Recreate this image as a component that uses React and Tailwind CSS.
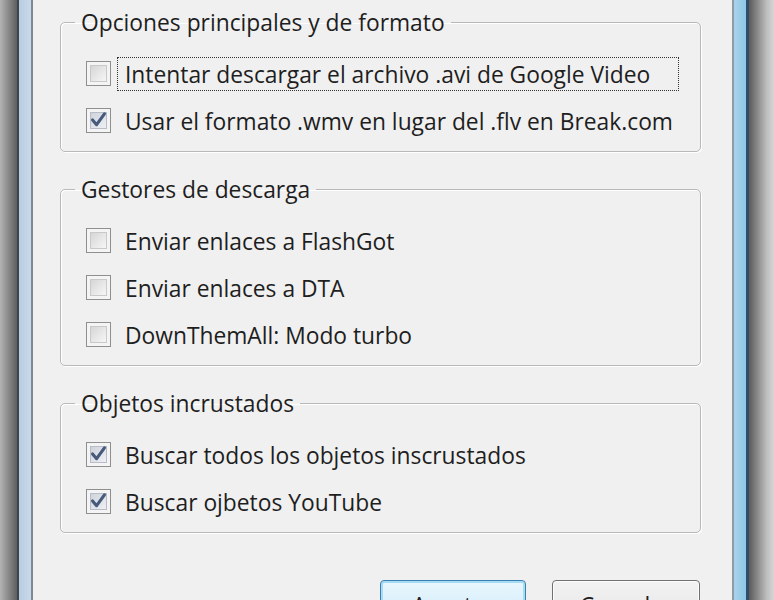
import React from 'react';

const GROUPS = [
  {
    title: 'Opciones principales y de formato',
    items: [
      { label: 'Intentar descargar el archivo .avi de Google Video', checked: false, focused: true },
      { label: 'Usar el formato .wmv en lugar del .flv en Break.com', checked: true },
    ],
  },
  {
    title: 'Gestores de descarga',
    items: [
      { label: 'Enviar enlaces a FlashGot', checked: false },
      { label: 'Enviar enlaces a DTA', checked: false },
      { label: 'DownThemAll: Modo turbo', checked: false },
    ],
  },
  {
    title: 'Objetos incrustados',
    items: [
      { label: 'Buscar todos los objetos inscrustados', checked: true },
      { label: 'Buscar ojbetos YouTube', checked: true },
    ],
  },
];

function Checkbox({ checked }) {
  return (
    <div className="w-[25px] h-[25px] shrink-0 border border-[#8f8f8f] bg-[#f4f4f4] p-[3px]">
      <div
        className={`relative w-full h-full border ${
          checked
            ? 'border-[#b7bcc6] bg-[linear-gradient(135deg,#cfd3db,#eef0f4)]'
            : 'border-[#c9c9c9] bg-[linear-gradient(135deg,#d6d6d6,#f6f6f6)]'
        }`}
      >
        {checked && (
          <svg viewBox="0 0 16 16" className="absolute left-[-2px] top-[-3px] w-[19px] h-[19px]">
            <path d="M3 8.4 L6.4 12.4 L13 3.2" fill="none" stroke="#465a7c" strokeWidth="2.6" strokeLinejoin="round" strokeLinecap="round" />
          </svg>
        )}
      </div>
    </div>
  );
}

function Row({ label, checked, focused }) {
  return (
    <div className="flex items-center h-[47px] whitespace-nowrap">
      <Checkbox checked={checked} />
      <span
        className={`ml-[6px] pt-[2px] leading-[30px] ${
          focused ? 'border border-dotted border-[#333] pl-[7px] pr-[28px]' : 'pl-[7px] border border-transparent'
        }`}
      >
        {label}
      </span>
    </div>
  );
}

function Group({ title, items }) {
  return (
    <fieldset className="border border-[#b9b9b9] rounded-[5px] px-0 pt-[13px] pb-[7px] shadow-[inset_1px_1px_0_#fff,1px_1px_0_#fff]">
      <legend className="ml-[14px] px-[6px] pt-[1px] leading-[29px] whitespace-nowrap">{title}</legend>
      <div className="pl-[25px]">
        {items.map((it) => (
          <Row key={it.label} {...it} />
        ))}
      </div>
    </fieldset>
  );
}

export default function App() {
  return (
    <div className="w-[774px] h-[600px] overflow-hidden flex font-['Open_Sans',sans-serif] text-[22.8px] text-[#1e1e1e]">
      {/* left shadow + frame */}
      <div className="w-[17px] shrink-0 bg-[linear-gradient(to_right,#b4b4b4,#5e5e5e)]" />
      <div className="w-[2px] shrink-0 bg-[#3b4550]" />
      <div className="w-[12px] shrink-0 bg-[linear-gradient(to_right,#b9cde0,#c9d9ea)]" />
      <div className="w-[2px] shrink-0 bg-[#7d8a96]" />

      {/* dialog content */}
      <div className="w-[699px] shrink-0 bg-[#f0f0f0] flex flex-col pl-[27px] pr-[31px] pt-[7px]">
        <div className="flex flex-col gap-[22px]">
          {GROUPS.map((g) => (
            <Group key={g.title} {...g} />
          ))}
        </div>
        <div className="flex justify-end gap-[26px] mt-[47px] pr-[1px]">
          <button className="w-[146px] h-[52px] shrink-0 rounded-[4px] border border-[#3c7fb1] bg-[linear-gradient(#eaf6fd,#d9f0fc_50%,#bee6fd)] shadow-[inset_0_0_0_2px_#a7dcf5]">
            Aceptar
          </button>
          <button className="w-[148px] h-[52px] shrink-0 rounded-[4px] border border-[#707070] bg-[linear-gradient(#f2f2f2,#ebebeb_50%,#dddddd)] shadow-[inset_0_0_0_1px_#fcfcfc]">
            Cancelar
          </button>
        </div>
      </div>

      {/* right frame + shadow */}
      <div className="w-[2px] shrink-0 bg-[#8e9aa6]" />
      <div className="w-[12px] shrink-0 bg-[linear-gradient(to_right,#a9d2ea,#8ec7e8)]" />
      <div className="w-[3px] shrink-0 bg-[#2e4d6b]" />
      <div className="flex-1 bg-[linear-gradient(to_right,#5a5a5a,#bdbdbd_70%,#d6d6d6)]" />
    </div>
  );
}
